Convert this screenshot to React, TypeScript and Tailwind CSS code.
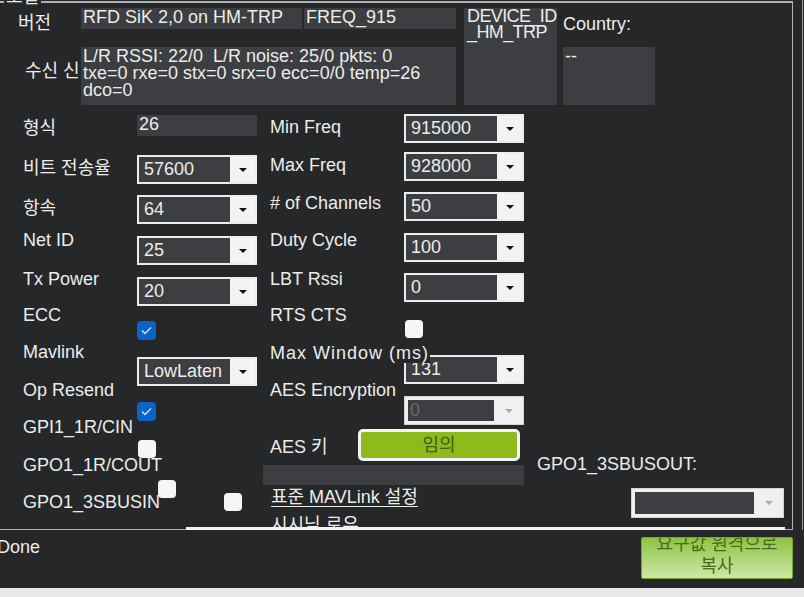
import React from 'react';

const FONT = "font-['Liberation_Sans','Noto_Sans_CJK_KR',sans-serif]";

function Arrow({ dim }: { dim?: boolean }) {
  return (
    <span
      className={`block h-0 w-0 border-x-[4px] border-t-[4px] border-x-transparent ${
        dim ? 'border-t-[#a9a9a9]' : 'border-t-[#111111]'
      }`}
    />
  );
}

function Combo({ value, className = '' }: { value: string; className?: string }) {
  return (
    <div className={`flex h-[29px] w-[120px] shrink-0 border-2 border-[#ececec] bg-[#f3f3f3] ${className}`}>
      <div className="flex-1 overflow-hidden whitespace-nowrap bg-[#3d3e41] pl-[5px] leading-[25px]">{value}</div>
      <div className="flex w-[25px] items-center justify-center">
        <Arrow />
      </div>
    </div>
  );
}

function DisabledCombo({ value = '', className = '' }: { value?: string; className?: string }) {
  return (
    <div className={`flex shrink-0 border border-[#d4d4d4] bg-[#f0f0f0] py-[3px] pl-[3px] ${className}`}>
      <div className="flex-1 bg-[#3d3e41] pl-[2px] leading-[21px] text-[#6a6a6a]">{value}</div>
      <div className="flex w-[29px] items-center justify-center">
        <Arrow dim />
      </div>
    </div>
  );
}

function Check({ on, className = '' }: { on?: boolean; className?: string }) {
  if (!on) return <div className={`h-[18px] w-[18px] shrink-0 rounded-[4px] bg-[#f6f6f6] ${className}`} />;
  return (
    <div className={`flex h-[19px] w-[19px] shrink-0 items-center justify-center rounded-[4px] bg-[#0a63c9] ${className}`}>
      <svg width="11" height="9" viewBox="0 0 11 9">
        <path d="M1 4.5 L4 7.5 L10 1.5" stroke="#d6e8ff" strokeWidth="1.3" fill="none" />
      </svg>
    </div>
  );
}

const leftLabels = [
  { text: '형식', h: 'h-[40px]' },
  { text: '비트 전송율', h: 'h-[40px]' },
  { text: '항속', h: 'h-[32px]' },
  { text: 'Net ID', h: 'h-[39px]' },
  { text: 'Tx Power', h: 'h-[36px]' },
  { text: 'ECC', h: 'h-[37px]' },
  { text: 'Mavlink', h: 'h-[38px]' },
  { text: 'Op Resend', h: 'h-[37px]' },
  { text: 'GPI1_1R/CIN', h: 'h-[38px]' },
  { text: 'GPO1_1R/COUT', h: 'h-[37px]' },
  { text: 'GPO1_3SBUSIN', h: 'h-[20px]' },
];

export default function App() {
  return (
    <div className={`flex h-[597px] w-[804px] flex-col overflow-hidden bg-[#262729] text-[18px] leading-[20px] text-[#ececec] ${FONT}`}>
      <div className="flex h-[530px] shrink-0">
        {/* group box */}
        <div className="relative mt-[1px] h-[529px] w-[793px] shrink-0 border-t-2 border-r border-b border-[#b2b2b2]">
          <span className="absolute -top-[16px] left-[4px] bg-[#262729] px-[2px]">로컬</span>

          <div className="h-full overflow-hidden">
            {/* top: version / rssi / device / country */}
            <div className="mt-[5px] flex h-[97px]">
              <div className="w-[456px] shrink-0">
                <div className="flex h-[21px]">
                  <div className="w-[81px] shrink-0 pl-[18px] pt-[5px]">버전</div>
                  <div className="w-[221px] shrink-0 overflow-hidden whitespace-nowrap bg-[#3d3e41] pl-[2px] leading-[18px]">
                    RFD SiK 2,0 on HM-TRP
                  </div>
                  <div className="ml-[2px] w-[152px] shrink-0 bg-[#3d3e41] pl-[2px] leading-[18px]">FREQ_915</div>
                </div>
                <div className="mt-[18px] flex h-[58px]">
                  <div className="w-[81px] shrink-0 whitespace-nowrap pl-[25px] pt-[14px]">수신 신</div>
                  <div className="w-[375px] shrink-0 whitespace-pre bg-[#3d3e41] pl-[2px] pt-[1px] leading-[17px]">
                    {'L/R RSSI: 22/0  L/R noise: 25/0 pkts: 0\ntxe=0 rxe=0 stx=0 srx=0 ecc=0/0 temp=26\ndco=0'}
                  </div>
                </div>
              </div>
              <div className="ml-[8px] w-[93px] shrink-0 overflow-hidden whitespace-nowrap bg-[#3d3e41] pl-[3px] leading-[16px] tracking-[-0.6px]">
                DEVICE_ID
                <br />
                _HM_TRP
              </div>
              <div className="ml-[6px] w-[92px] shrink-0">
                <div className="h-[39px] pt-[6px]">Country:</div>
                <div className="h-[58px] bg-[#3d3e41] pl-[2px] pt-[1px] leading-[17px]">--</div>
              </div>
            </div>

            {/* settings */}
            <div className="flex">
              <div className="w-[137px] shrink-0 pl-[23px] pt-[13px]">
                {leftLabels.map((l) => (
                  <div key={l.text} className={`${l.h} whitespace-nowrap`}>
                    {l.text}
                  </div>
                ))}
              </div>

              <div className="w-[120px] shrink-0 pt-[10px]">
                <div className="h-[21px] bg-[#3d3e41] pl-[2px] leading-[18px]">26</div>
                <Combo value="57600" className="mt-[19px]" />
                <Combo value="64" className="mt-[11px]" />
                <Combo value="25" className="mt-[12px]" />
                <Combo value="20" className="mt-[12px]" />
                <Check on className="mt-[15px]" />
                <Combo value="LowLaten" className="mt-[17px]" />
                <Check on className="mt-[16px]" />
                <Check className="ml-[1px] mt-[19px]" />
                <div className="flex">
                  <Check className="ml-[21px] mt-[22px]" />
                  <Check className="ml-[48px] mt-[35px]" />
                </div>
              </div>

              <div className="ml-[6px] w-[261px] shrink-0 pt-[9px]">
                <div className="flex h-[38px] pl-[7px]">
                  <div className="mt-[3px] w-[134px] shrink-0">Min Freq</div>
                  <Combo value="915000" />
                </div>
                <div className="flex h-[40px] pl-[7px]">
                  <div className="mt-[3px] w-[134px] shrink-0">Max Freq</div>
                  <Combo value="928000" />
                </div>
                <div className="flex h-[38px] pl-[7px]">
                  <div className="mt-[1px] w-[134px] shrink-0"># of Channels</div>
                  <Combo value="50" />
                </div>
                <div className="flex h-[39px] pl-[7px]">
                  <div className="w-[134px] shrink-0">Duty Cycle</div>
                  <Combo value="100" className="mt-[3px]" />
                </div>
                <div className="flex h-[36px] pl-[7px]">
                  <div className="w-[134px] shrink-0">LBT Rssi</div>
                  <Combo value="0" className="mt-[4px]" />
                </div>
                <div className="flex h-[38px] pl-[7px]">
                  <div className="w-[134px] shrink-0">RTS CTS</div>
                  <Check className="ml-[1px] mt-[15px]" />
                </div>
                <div className="flex h-[37px] pl-[7px]">
                  <div className="relative z-10 w-[134px] shrink-0">
                    <span className="whitespace-nowrap bg-[#262729] pr-[1px] tracking-[1px]">Max Window (ms)</span>
                  </div>
                  <Combo value="131" className="mt-[12px]" />
                </div>
                <div className="flex h-[49px] pl-[7px]">
                  <div className="w-[134px] shrink-0">AES Encryption</div>
                  <DisabledCombo value="0" className="mt-[16px] h-[29px] w-[120px]" />
                </div>
                <div className="flex h-[36px] pl-[7px]">
                  <div className="mt-[8px] w-[88px] shrink-0">AES 키</div>
                  <div className="flex h-[32px] w-[162px] items-center justify-center rounded-[5px] border-[3px] border-[#f4f4f4] bg-[#8dbb1e] text-[#3f5e05]">
                    임의
                  </div>
                </div>
                <div className="h-[20px] bg-[#3d3e41]" />
                <div className="mt-[2px] h-[20px] pl-[8px] underline underline-offset-[3px]">표준 MAVLink 설정</div>
                <div className="mt-[8px] pl-[8px]">시시닉 로우</div>
              </div>

              <div className="ml-[13px] w-[247px] shrink-0 pt-[349px]">
                <div>GPO1_3SBUSOUT:</div>
                <DisabledCombo className="ml-[94px] mt-[14px] h-[30px] w-[153px]" />
              </div>
            </div>
          </div>

          <div className="absolute -bottom-[1px] left-[186px] h-[3px] w-[599px] bg-[#f2f2f2]" />
        </div>
        <div className="w-[9px] shrink-0" />
        <div className="w-[1px] shrink-0 bg-[#9c9c9c]" />
      </div>

      {/* status row */}
      <div className="flex h-[58px] shrink-0">
        <div className="-ml-[3px] mt-[7px] w-[644px] shrink-0">Done</div>
        <div className="mt-[7px] h-[42px] w-[152px] shrink-0 overflow-hidden rounded-[2px] border border-[#76a82c] bg-linear-to-b from-[#8cc43c] to-[#cfe7a6] text-center text-[#4b6a1c]">
          <div className="-mt-[5px] leading-[22px]">
            요구값 원격으로
            <br />
            복사
          </div>
        </div>
      </div>
      <div className="flex-1 bg-[#e9e9e9]" />
    </div>
  );
}
